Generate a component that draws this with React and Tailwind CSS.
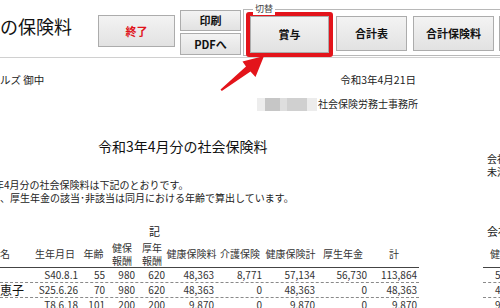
import React from "react";

const btn =
  "flex items-center justify-center border border-[#acacac] bg-gradient-to-b from-[#f3f3f3] to-[#e2e2e2] text-[11px] font-bold text-[#111] leading-none";

export default function App() {
  const rows = [
    ["", "S40.8.1", "55", "980", "620", "48,363", "8,771", "57,134", "56,730", "113,864"],
    ["恵子", "S25.6.26", "70", "980", "620", "48,363", "0", "48,363", "0", "48,363"],
    ["", "T8.6.18", "101", "200", "200", "9,870", "0", "9,870", "0", "9,870"],
  ];
  const right = ["57,134", "48,363", "9,870"];
  const widths = [30, 50, 27, 30, 30, 49, 48, 53, 52, 50];
  const wcls = [
    "w-[30px]", "w-[50px]", "w-[27px]", "w-[30px]", "w-[30px]",
    "w-[49px]", "w-[48px]", "w-[53px]", "w-[52px]", "w-[50px]",
  ];
  const heads = [
    ["名"], ["生年月日"], ["年齢"], ["健保", "報酬"], ["厚年", "報酬"],
    ["健康保険料"], ["介護保険"], ["健康保険計"], ["厚生年金"], ["計"],
  ];
  return (
    <div className="relative w-[500px] h-[308px] overflow-hidden bg-white font-['Noto_Sans_CJK_JP',sans-serif] text-[#222]">
      {/* header */}
      <div className="flex items-start h-[58px] border-b border-[#d0d0d0] w-[600px]">
        <div className="w-[98px] mt-[14px] text-[18px] leading-[24px] text-[#111]">の保険料</div>
        <div className={btn + " mt-[15px] w-[77px] h-[32px] text-[#e0141b]"}>終了</div>
        <div className="ml-[5px] mt-[10px] flex flex-col gap-[2px] w-[61px]">
          <div className={btn + " h-[21px]"}>印刷</div>
          <div className={btn + " h-[22px]"}>PDFへ</div>
        </div>
        <div className="relative ml-[2px] mt-[9px] h-[47px] w-[300px] border-t border-l border-b border-[#b8b8b8] flex items-start pl-[2px] pt-[2px]">
          <div className="absolute -top-[7px] left-[9px] bg-white px-[2px] text-[9px] leading-[12px] text-[#444]">切替</div>
          <div className="w-[87px] h-[45px] shrink-0 border-[4px] border-[#e3141b] rounded-[3px] bg-white">
            <div className={btn + " w-full h-full"}>賞与</div>
          </div>
          <div className={btn + " ml-[3px] mt-[4px] w-[71px] h-[35px] shrink-0"}>合計表</div>
          <div className={btn + " ml-[6px] mt-[4px] w-[81px] h-[35px] shrink-0"}>合計保険料</div>
          <div className={btn + " ml-[5px] mt-[4px] w-[80px] h-[35px] shrink-0"}>印刷設定</div>
        </div>
      </div>

      <div className="flex items-start">
        {/* document column */}
        <div className="w-[420px] shrink-0 text-[10px]">
          <div className="mt-[14px] h-[16px] leading-[16px] flex justify-between pr-[4px]">
            <span className="text-[10.5px]">ルズ 御中</span>
            <span className="text-[10.5px]">令和3年4月21日</span>
          </div>
          <div className="mt-[8px] h-[16px] leading-[16px] flex justify-end items-center pr-[2px]">
            <div className="flex h-[13px] mr-[1px]">
              <div className="w-[8px] bg-[#ededed]" />
              <div className="w-[15px] bg-[#c6c6c6]" />
              <div className="w-[7px] bg-[#dedede]" />
              <div className="w-[20px] bg-[#d0d0d0]" />
              <div className="w-[10px] bg-[#ececec]" />
            </div>
            <span>社会保険労務士事務所</span>
          </div>
          <div className="mt-[24px] h-[20px] leading-[20px] text-[14px] text-[#111] pl-[98px]">
            令和3年4月分の社会保険料
          </div>
          <div className="mt-[22px] h-[13px] leading-[13px] -ml-[6px] whitespace-nowrap">
            年4月分の社会保険料は下記のとおりです。
          </div>
          <div className="h-[13px] leading-[13px] whitespace-nowrap">
            、厚生年金の該当･非該当は同月における年齢で算出しています。
          </div>
          <div className="mt-[20px] h-[14px] leading-[14px] pl-[149px] text-[11px]">記</div>

          {/* table */}
          <div className="mt-[2px] w-[419px] text-[10px] text-[#333]">
            <div className="flex h-[28px] border-b border-[#444] leading-[13px]">
              {heads.map((h, i) => (
                <div
                  key={i}
                  className={
                    wcls[i] +
                    " shrink-0 flex flex-col justify-center whitespace-nowrap " +
                    (i === 0 ? "items-start" : "items-center")
                  }
                >
                  {h.map((t, k) => (
                    <span key={k}>{t}</span>
                  ))}
                </div>
              ))}
            </div>
            {rows.map((r, i) => (
              <div key={i} className="flex h-[15px] leading-[14px] border-b border-dashed border-[#8a8a8a]">
                {r.map((v, j) => (
                  <div
                    key={j}
                    className={
                      wcls[j] +
                      " shrink-0 whitespace-nowrap " +
                      (j === 0 ? "text-left text-[12px] text-[#111]" : "text-right pr-[2px]")
                    }
                  >
                    {v}
                  </div>
                ))}
              </div>
            ))}
          </div>
        </div>

        {/* right column */}
        <div className="ml-[63px] w-[60px] shrink-0 text-[10px] whitespace-nowrap">
          <div className="mt-[94px] h-[13px] leading-[13px] pl-[4px]">会社負担</div>
          <div className="h-[13px] leading-[13px] pl-[4px]">未満の</div>
          <div className="mt-[46px] h-[14px] leading-[14px] pl-[4px] text-[11px]">会社負担分</div>
          <div className="mt-[2px] h-[28px] leading-[27px] pl-[7px] border-b border-[#444] text-[#333]">健康保険料</div>
          {right.map((v, i) => (
            <div key={i} className="h-[15px] leading-[14px] pl-[12px] border-b border-dashed border-[#8a8a8a] text-[#333]">{v}</div>
          ))}
        </div>
      </div>

      {/* red arrow overlay */}
      <svg className="absolute inset-0 pointer-events-none" width="500" height="308" viewBox="0 0 500 308">
        <polygon
          points="220.5,89.5 246,66.5 242.5,61.5 264,56 255.5,77 250.5,71.5 221.8,91"
          fill="#e3141b"
        />
      </svg>
    </div>
  );
}
